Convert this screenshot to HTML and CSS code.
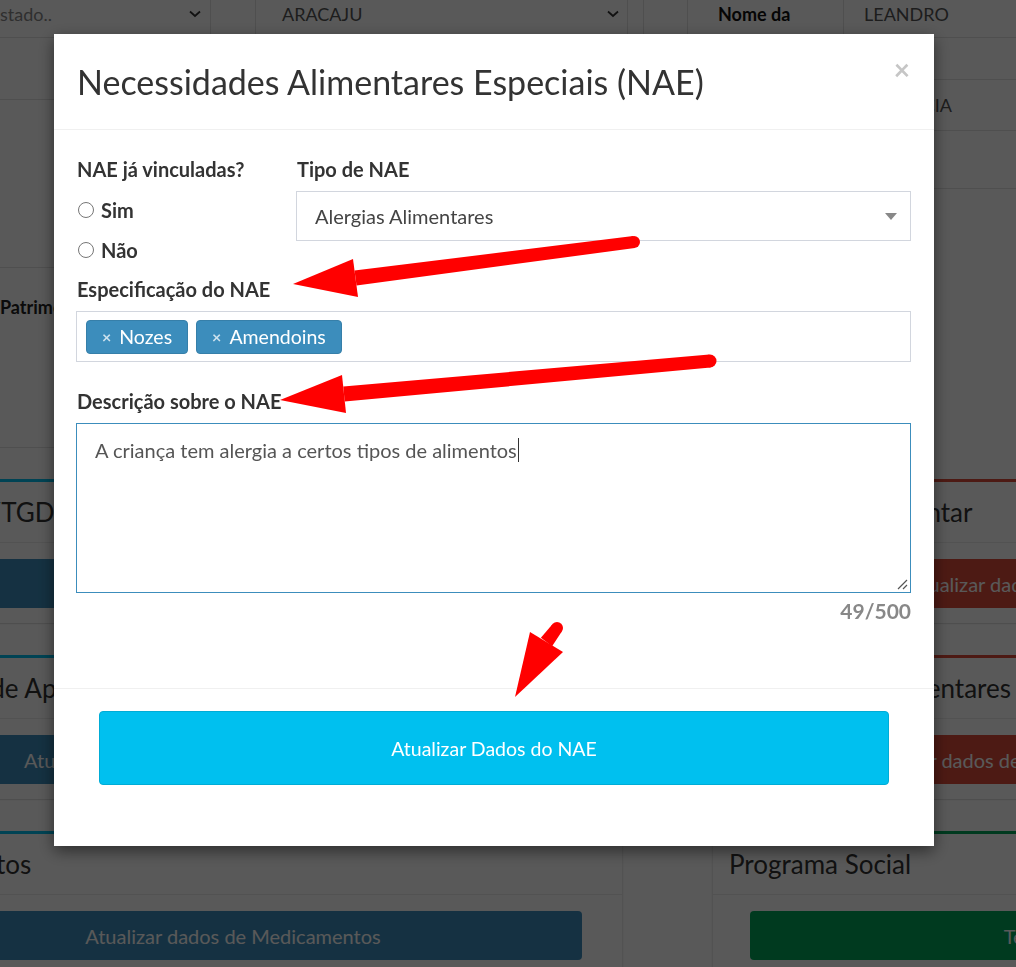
FILE: index.html
```html
<!DOCTYPE html>
<html lang="pt-BR">
<head>
<meta charset="utf-8">
<title>Necessidades Alimentares Especiais (NAE)</title>
<link rel="stylesheet" href="styles.css">
</head>
<body>
<div class="page">
  <div class="toprow">
    <div class="cell c1"><span class="ph">stado..</span><svg class="chev" width="12" height="8" viewBox="0 0 12 8"><polyline points="1,1.5 6,6 11,1.5" fill="none" stroke="#333" stroke-width="1.8"/></svg></div>
    <div class="cell c2"></div>
    <div class="cell c3"><span class="val">ARACAJU</span><svg class="chev" width="12" height="8" viewBox="0 0 12 8"><polyline points="1,1.5 6,6 11,1.5" fill="none" stroke="#333" stroke-width="1.8"/></svg></div>
    <div class="cell c4"></div>
    <div class="cell c5"></div>
    <div class="cell c6"><b>Nome da</b></div>
    <div class="cell c7"><span class="val">LEANDRO</span></div>
  </div>
  <div class="upper">
    <div class="ul">
      <div class="urow h62"></div>
      <div class="urow h168"></div>
      <div class="urow h180"><b class="lbl">Patrimônio</b></div>
    </div>
    <div class="ur">
      <div class="urow h42"></div>
      <div class="urow h51"><span class="val name">PATRÍCIA</span></div>
      <div class="urow h58"></div>
    </div>
  </div>
  <div class="boxes">
    <div class="box info">
      <div class="box-head">Deficiência/TGD/AH</div>
      <div class="box-body"><div class="bbtn primary">Atualizar dados de Deficiência/TGD/AH</div></div>
    </div>
    <div class="box danger">
      <div class="box-head">Orientação Alimentar</div>
      <div class="box-body"><div class="bbtn red">Atualizar dados de Orientações Alimentares</div></div>
    </div>
    <div class="box info">
      <div class="box-head">Professora de Apoio</div>
      <div class="box-body"><div class="bbtn primary">Atualizar dados de Profissional de Apoio Escolar</div></div>
    </div>
    <div class="box danger">
      <div class="box-head">Dificuldades Alimentares</div>
      <div class="box-body"><div class="bbtn red">Atualizar dados de Necessidades Alimentares Especiais</div></div>
    </div>
    <div class="box info">
      <div class="box-head">Medicamentos</div>
      <div class="box-body"><div class="bbtn primary">Atualizar dados de Medicamentos</div></div>
    </div>
    <div class="box success">
      <div class="box-head">Programa Social</div>
      <div class="box-body"><div class="bbtn green">Tem Programa Social?</div></div>
    </div>
  </div>
</div>

<div class="backdrop"></div>

<div class="modal-layer">
  <div class="modal">
    <div class="modal-header">
      <h4 class="modal-title">Necessidades Alimentares Especiais (NAE)</h4>
      <span class="close">×</span>
    </div>
    <div class="modal-body">
      <div class="row1">
        <div class="col-left">
          <div class="label">NAE já vinculadas?</div>
          <label class="radio"><span class="circle"></span>Sim</label>
          <label class="radio"><span class="circle"></span>Não</label>
        </div>
        <div class="col-right">
          <div class="label">Tipo de NAE</div>
          <div class="select">
            <span>Alergias Alimentares</span>
            <span class="caret"></span>
          </div>
        </div>
      </div>
      <div class="label">Especificação do NAE</div>
      <div class="tags">
        <span class="tag"><span class="tx">×</span>Nozes</span>
        <span class="tag"><span class="tx">×</span>Amendoins</span>
      </div>
      <div class="label lbl-desc">Descrição sobre o NAE</div>
      <div class="textarea">
        <span>A criança tem alergia a certos tipos de alimentos</span><span class="cursor"></span>
        <svg class="grip" width="12" height="12" viewBox="0 0 12 12"><path d="M11 2 L2 11 M11 7 L7 11" stroke="#555" stroke-width="1.2" fill="none"/></svg>
      </div>
      <div class="counter">49/500</div>
    </div>
    <div class="modal-footer">
      <div class="btn-nae">Atualizar Dados do NAE</div>
    </div>
  </div>
</div>

<svg class="annot" width="1016" height="967" viewBox="0 0 1016 967">
  <g fill="#ff0000">
    <circle cx="634" cy="242" r="6"/>
    <polygon points="633.2,236 354.5,270.6 356.5,285.4 634.8,248"/>
    <polygon points="293,284 353,259 358,297"/>
    <circle cx="710" cy="361" r="6.5"/>
    <polygon points="709.4,354.5 343.3,386.5 344.7,401.5 710.6,367.5"/>
    <polygon points="280,400 342,375 346,413"/>
    <circle cx="557" cy="628" r="6"/>
    <polygon points="552.2,624.4 540.9,637.8 552.1,646.2 561.8,631.6"/>
    <polygon points="515,697 530,632 563,652"/>
  </g>
</svg>
</body>
</html>
```

FILE: styles.css
```css
* { box-sizing: border-box; }
html, body { margin: 0; padding: 0; overflow: hidden; }
body {
  width: 1016px;
  height: 967px;
  font-family: "Lato", "Open Sans", sans-serif;
  color: #333;
  background: #fff;
}

/* ---------- background page ---------- */
.page { width: 1016px; height: 967px; overflow: hidden; font-size: 18px; }

.toprow { display: flex; height: 38px; border-bottom: 1px solid #e2e2e2; }
.cell {
  border-right: 1px solid #e2e2e2;
  padding-top: 2px;
  line-height: 25px;
  display: flex;
  align-items: flex-start;
  flex: none;
}
.c1 { width: 211px; justify-content: space-between; padding-right: 9px; }
.c2 { width: 45px; }
.c3 { width: 372px; justify-content: space-between; padding: 2px 8px 0 26px; }
.c4 { width: 16px; }
.c5 { width: 44px; }
.c6 { width: 156px; padding-left: 30px; color: #111; }
.c7 { flex: 1; border-right: 0; padding-left: 20px; }
.chev { margin-top: 8px; }
.ph { color: #888; }
.val { color: #555; }

.upper { display: flex; height: 410px; }
.ul { width: 500px; }
.ur { flex: 1; }
.urow { border-bottom: 1px solid #e2e2e2; }
.h62 { height: 62px; }
.h168 { height: 168px; }
.h180 { height: 180px; padding-top: 27px; line-height: 25px; }
.h42 { height: 42px; }
.h51 { height: 51px; display: flex; align-items: center; padding-left: 375px; }
.h58 { height: 58px; }
.lbl { color: #222; }

.boxes {
  margin: 31px 0 0 -154px;
  display: grid;
  grid-template-columns: 777px 777px;
  column-gap: 89px;
  row-gap: 32px;
}
.box {
  background: #fff;
  border-top: 3px solid #00c0ef;
  border-left: 1px solid #ececec;
  border-right: 1px solid #ececec;
  box-shadow: 0 1px 1px rgba(0, 0, 0, 0.12);
}
.box.danger { border-top-color: #dd4b39; }
.box.success { border-top-color: #00a65a; }
.box-head {
  height: 61px;
  border-bottom: 1px solid #ececec;
  display: flex;
  align-items: center;
  padding: 0 16px;
  font-size: 26px;
  color: #333;
  white-space: nowrap;
}
.box-body { padding: 16px 40px 15px 37px; }
.bbtn {
  height: 49px;
  border-radius: 4px;
  display: flex;
  align-items: center;
  justify-content: center;
  color: #fff;
  font-size: 20px;
  white-space: nowrap;
}
.bbtn.primary { background: #3c8dbc; }
.bbtn.red { background: #dd4b39; }
.bbtn.green { background: #00a65a; }

/* ---------- modal ---------- */
.backdrop { position: fixed; inset: 0; background: rgba(0, 0, 0, 0.65); }
.modal-layer { position: fixed; inset: 0; }
.modal {
  width: 880px;
  margin: 34px 0 0 54px;
  background: #fff;
  box-shadow: 0 5px 15px rgba(0, 0, 0, 0.5);
}
.modal-header {
  display: flex;
  justify-content: space-between;
  align-items: flex-start;
  padding: 30px 24px 30px 23px;
  border-bottom: 1px solid #f0f0f0;
}
.modal-title {
  margin: 0;
  font-size: 34px;
  line-height: 35px;
  font-weight: 400;
  color: #333;
}
.close {
  font-size: 28px;
  font-weight: 700;
  line-height: 28px;
  color: #c6c6c6;
  margin-top: -9px;
}
.modal-body { padding: 27px 23px 65px 22px; font-size: 20px; }
.label { font-weight: 700; line-height: 25px; margin-bottom: 9px; color: #333; padding-left: 1px; }
.row1 { display: grid; grid-template-columns: 220px 1fr; margin-bottom: 7px; }
.col-left .label { margin-bottom: 8px; }
.radio {
  display: flex;
  align-items: center;
  height: 40px;
  font-weight: 700;
  color: #333;
}
.circle {
  width: 16px;
  height: 16px;
  border: 1px solid #767676;
  border-radius: 50%;
  margin: 0 7px 0 2px;
  background: #fff;
  flex: none;
}
.select {
  height: 50px;
  border: 1px solid #d2d6de;
  display: flex;
  align-items: center;
  justify-content: space-between;
  padding: 0 13px 0 18px;
  color: #444;
}
.caret {
  width: 0;
  height: 0;
  border-style: solid;
  border-width: 7px 6px 0 6px;
  border-color: #888 transparent transparent transparent;
}
.tags {
  height: 51px;
  border: 1px solid #d2d6de;
  display: flex;
  align-items: center;
  gap: 8px;
  padding: 0 9px;
}
.tag {
  height: 34px;
  background: #3c8dbc;
  border: 1px solid #367fa9;
  border-radius: 4px;
  color: #fff;
  font-size: 19.5px;
  display: flex;
  align-items: center;
  padding: 0 15px;
}
.tx { color: rgba(255, 255, 255, 0.75); font-weight: 700; font-size: 16px; margin-right: 8px; }
.lbl-desc { margin-top: 27px; }
.textarea {
  position: relative;
  height: 170px;
  border: 1px solid #3c8dbc;
  padding: 14px 18px;
  line-height: 24px;
  color: #555;
}
.cursor {
  display: inline-block;
  width: 1px;
  height: 24px;
  background: #333;
  vertical-align: top;
  margin-left: 1px;
}
.grip { position: absolute; right: 2px; bottom: 2px; }
.counter {
  margin-top: 5px;
  text-align: right;
  font-weight: 700;
  font-size: 21px;
  line-height: 25px;
  color: #888;
}
.modal-footer {
  border-top: 1px solid #f0f0f0;
  padding: 22px 45px 61px;
}
.btn-nae {
  height: 74px;
  background: #00c0ef;
  border: 1px solid #00acd6;
  border-radius: 4px;
  color: #fff;
  font-size: 19.5px;
  display: flex;
  align-items: center;
  justify-content: center;
}

.annot { position: fixed; left: 0; top: 0; pointer-events: none; }
```
